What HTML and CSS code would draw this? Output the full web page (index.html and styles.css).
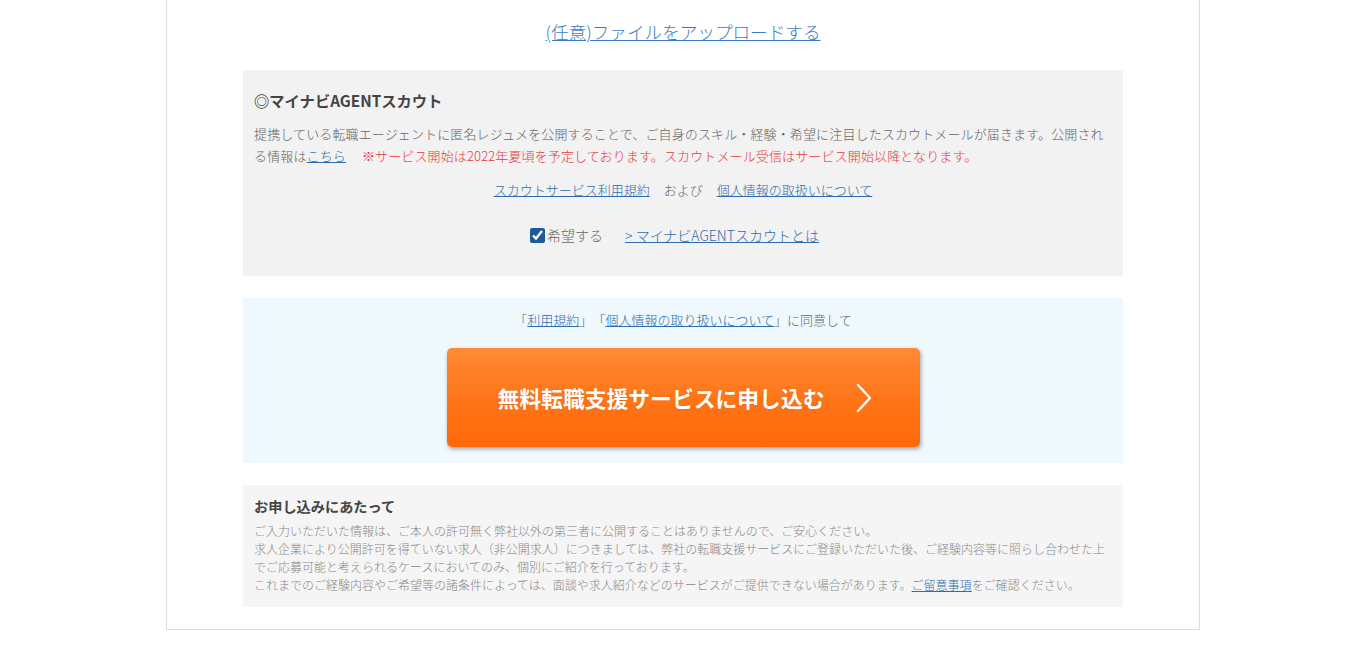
FILE: index.html
```html
<!DOCTYPE html>
<html lang="ja">
<head>
  <meta charset="UTF-8" />
  <meta name="viewport" content="width=device-width, initial-scale=1" />
  <title>お申し込み</title>
  <link rel="stylesheet" href="styles.css">
</head>
<body>

  <div class="container">
    <p class="upload"><a href="#">(任意)ファイルをアップロードする</a></p>

    <section class="scout">
      <h2>◎マイナビAGENTスカウト</h2>
      <p class="scout-text">提携している転職エージェントに匿名レジュメを公開することで、ご自身のスキル・経験・希望に注目したスカウトメールが届きます。公開される情報は<a href="#">こちら</a> <span class="notice">※サービス開始は2022年夏頃を予定しております。スカウトメール受信はサービス開始以降となります。</span></p>
      <p class="scout-links"><a href="#">スカウトサービス利用規約</a><span>および</span><a href="#">個人情報の取扱いについて</a></p>
      <div class="scout-check">
        <label><input type="checkbox" checked />希望する</label>
        <a href="#">&gt; マイナビAGENTスカウトとは</a>
      </div>
    </section>

    <section class="consent">
      <p class="consent-text">「<a href="#">利用規約</a>」「<a href="#">個人情報の取り扱いについて</a>」に同意して</p>
      <button type="submit" class="submit">
        <span>無料転職支援サービスに申し込む</span>
        <svg width="20" height="30" viewBox="0 0 20 30" aria-hidden="true">
          <polyline points="4,2 16,15 4,28" fill="none" stroke="#fff" stroke-width="2.4" stroke-linecap="round" stroke-linejoin="round" />
        </svg>
      </button>
    </section>

    <section class="notes">
      <h3>お申し込みにあたって</h3>
      <p>ご入力いただいた情報は、ご本人の許可無く弊社以外の第三者に公開することはありませんので、ご安心ください。<br>
      求人企業により公開許可を得ていない求人（非公開求人）につきましては、弊社の転職支援サービスにご登録いただいた後、ご経験内容等に照らし合わせた上でご応募可能と考えられるケースにおいてのみ、個別にご紹介を行っております。<br>
      これまでのご経験内容やご希望等の諸条件によっては、面談や求人紹介などのサービスがご提供できない場合があります。<a href="#">ご留意事項</a>をご確認ください。</p>
    </section>
  </div>

</body>
</html>
```

FILE: styles.css
```css
* {
  margin: 0;
  padding: 0;
  box-sizing: border-box;
}

body {
  font-family: "Noto Sans CJK JP", "Noto Sans", sans-serif;
  font-weight: 300;
  background: #ffffff;
  color: #666;
  padding-bottom: 20px;
  text-spacing-trim: space-all;
}

a {
  color: #2f6cad;
  text-decoration: underline;
}

.container {
  width: 1034px;
  margin: 0 auto;
  border: 1px solid #dddddd;
  border-top: none;
  padding: 18px 76px 22px;
}

.upload {
  text-align: center;
  font-size: 17.6px;
  line-height: 27px;
  margin-bottom: 25px;
}

.upload a {
  color: #3b7bbf;
}

/* scout */
.scout {
  background: #f2f2f2;
  padding: 18px 11px 30px;
}

.scout h2 {
  font-size: 15.3px;
  line-height: 24px;
  font-weight: 700;
  color: #444;
  margin-bottom: 11px;
}

.scout-text {
  font-size: 13px;
  line-height: 22px;
  letter-spacing: 0.01em;
}

.scout-text .notice {
  color: #e8383d;
  margin-left: 13px;
}

.scout-links {
  margin-top: 12px;
  display: flex;
  justify-content: center;
  gap: 14px;
  font-size: 13px;
  line-height: 22px;
}

.scout-check {
  margin-top: 23px;
  padding-right: 17px;
  display: flex;
  justify-content: center;
  align-items: center;
  gap: 22px;
  font-size: 14px;
  line-height: 22px;
}

.scout-check label {
  display: flex;
  align-items: center;
  gap: 2px;
}

.scout-check input {
  width: 15px;
  height: 15px;
  margin: 0;
  accent-color: #1d5a98;
}

/* consent */
.consent {
  margin-top: 22px;
  background: #eef8fd;
  padding: 11px 0 16px;
}

.consent-text {
  text-align: center;
  font-size: 13px;
  line-height: 22px;
}

.submit {
  display: flex;
  align-items: center;
  justify-content: center;
  gap: 30px;
  width: 473px;
  height: 99px;
  margin: 17px auto 0;
  padding-left: 6px;
  border: none;
  border-radius: 5px;
  background: linear-gradient(180deg, #ff8a36 0%, #ff7416 55%, #ff680a 100%);
  box-shadow: 1px 2px 4px rgba(0, 0, 0, 0.35);
  color: #fff;
  font-family: inherit;
  font-size: 21.8px;
  font-weight: 700;
  text-shadow: 0 0 2px rgba(160, 60, 0, 0.25);
  cursor: pointer;
}

/* notes */
.notes {
  margin-top: 22px;
  background: #f5f5f5;
  padding: 10px 11px 13px;
}

.notes h3 {
  font-size: 14.2px;
  line-height: 22px;
  font-weight: 700;
  color: #444;
  margin-bottom: 5px;
}

.notes p {
  font-size: 12px;
  line-height: 18px;
  color: #888;
}
```
